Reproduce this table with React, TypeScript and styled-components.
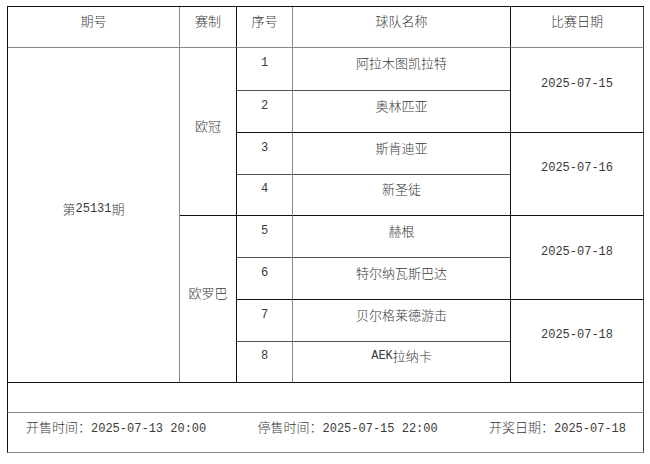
import React from "react";
import styled, { createGlobalStyle } from "styled-components";

const GlobalStyle = createGlobalStyle`
  body {
    margin: 0;
    background: #fff;
    color: #3a3a3a;
    font-family: "Noto Sans CJK SC", sans-serif;
  }
`;

const DARK = "#111";
const GRAY = "#8a8a8a";

const Page = styled.div`
  padding: 6px 0 0 7px;
`;

const Sheet = styled.div`
  width: 637px;
`;

const Grid = styled.div`
  display: grid;
  grid-template-columns: 172px 57px 56px 218px 133px;
  grid-template-rows: 41px 43px 42px 42px 41px 42px 42px 42px 41px;
  border-left: 1px solid ${DARK};
  border-top: 1px solid ${DARK};
`;

type CellProps = {
  $col: number;
  $row: number;
  $span?: number;
  $right: string;
  $bottom: string;
};

const Cell = styled.div<CellProps>`
  grid-column: ${(p) => p.$col};
  grid-row: ${(p) => p.$row} / span ${(p) => p.$span ?? 1};
  display: flex;
  align-items: center;
  justify-content: center;
  padding-bottom: 12px;
  box-sizing: border-box;
  border-right: 1px solid ${(p) => p.$right};
  border-bottom: 1px solid ${(p) => p.$bottom};
  font-size: 13px;
  font-weight: 300;
  line-height: 16px;
  white-space: nowrap;
`;

const Num = styled.span`
  font-family: "Liberation Mono", monospace;
  font-size: 12px;
  font-weight: 400;
`;

const Blank = styled.div`
  height: 29px;
  border-left: 1px solid ${DARK};
  border-right: 1px solid #444;
  border-bottom: 1px solid ${GRAY};
`;

const Footer = styled.div`
  height: 40px;
  display: flex;
  justify-content: space-between;
  align-items: center;
  padding: 0 17px 12px 18px;
  box-sizing: border-box;
  border-left: 1px solid ${DARK};
  border-right: 1px solid #444;
  border-bottom: 1px solid ${GRAY};
  font-size: 13px;
  font-weight: 300;
  white-space: nowrap;
`;

const FooterItem = styled.span`
  display: inline-flex;
  align-items: baseline;
`;

const rowBorder = (r: number) => (r % 2 === 0 ? DARK : "#555");

const teams: React.ReactNode[] = [
  "阿拉木图凯拉特",
  "奥林匹亚",
  "斯肯迪亚",
  "新圣徒",
  "赫根",
  "特尔纳瓦斯巴达",
  "贝尔格莱德游击",
  <>
    <Num>AEK</Num>拉纳卡
  </>,
];

const dates = ["2025-07-15", "2025-07-16", "2025-07-18", "2025-07-18"];

const headers = ["期号", "赛制", "序号", "球队名称", "比赛日期"];
const headerRight = [GRAY, DARK, GRAY, DARK, "#444"];

export default function App() {
  return (
    <Page>
      <GlobalStyle />
      <Sheet>
        <Grid>
          {headers.map((h, i) => (
            <Cell key={h} $col={i + 1} $row={1} $right={headerRight[i]} $bottom={GRAY}>
              {h}
            </Cell>
          ))}
          <Cell $col={1} $row={2} $span={8} $right={GRAY} $bottom={DARK}>
            第<Num>25131</Num>期
          </Cell>
          <Cell $col={2} $row={2} $span={4} $right={DARK} $bottom={DARK}>
            欧冠
          </Cell>
          <Cell $col={2} $row={6} $span={4} $right={DARK} $bottom={DARK}>
            欧罗巴
          </Cell>
          {teams.map((t, i) => (
            <React.Fragment key={i}>
              <Cell $col={3} $row={i + 2} $right={GRAY} $bottom={rowBorder(i + 1)}>
                <Num>{i + 1}</Num>
              </Cell>
              <Cell $col={4} $row={i + 2} $right={DARK} $bottom={rowBorder(i + 1)}>
                {t}
              </Cell>
            </React.Fragment>
          ))}
          {dates.map((d, i) => (
            <Cell key={i} $col={5} $row={i * 2 + 2} $span={2} $right="#444" $bottom={DARK}>
              <Num>{d}</Num>
            </Cell>
          ))}
        </Grid>
        <Blank />
        <Footer>
          <FooterItem>
            开售时间：<Num>2025-07-13 20:00</Num>
          </FooterItem>
          <FooterItem>
            停售时间：<Num>2025-07-15 22:00</Num>
          </FooterItem>
          <FooterItem>
            开奖日期：<Num>2025-07-18</Num>
          </FooterItem>
        </Footer>
      </Sheet>
    </Page>
  );
}
